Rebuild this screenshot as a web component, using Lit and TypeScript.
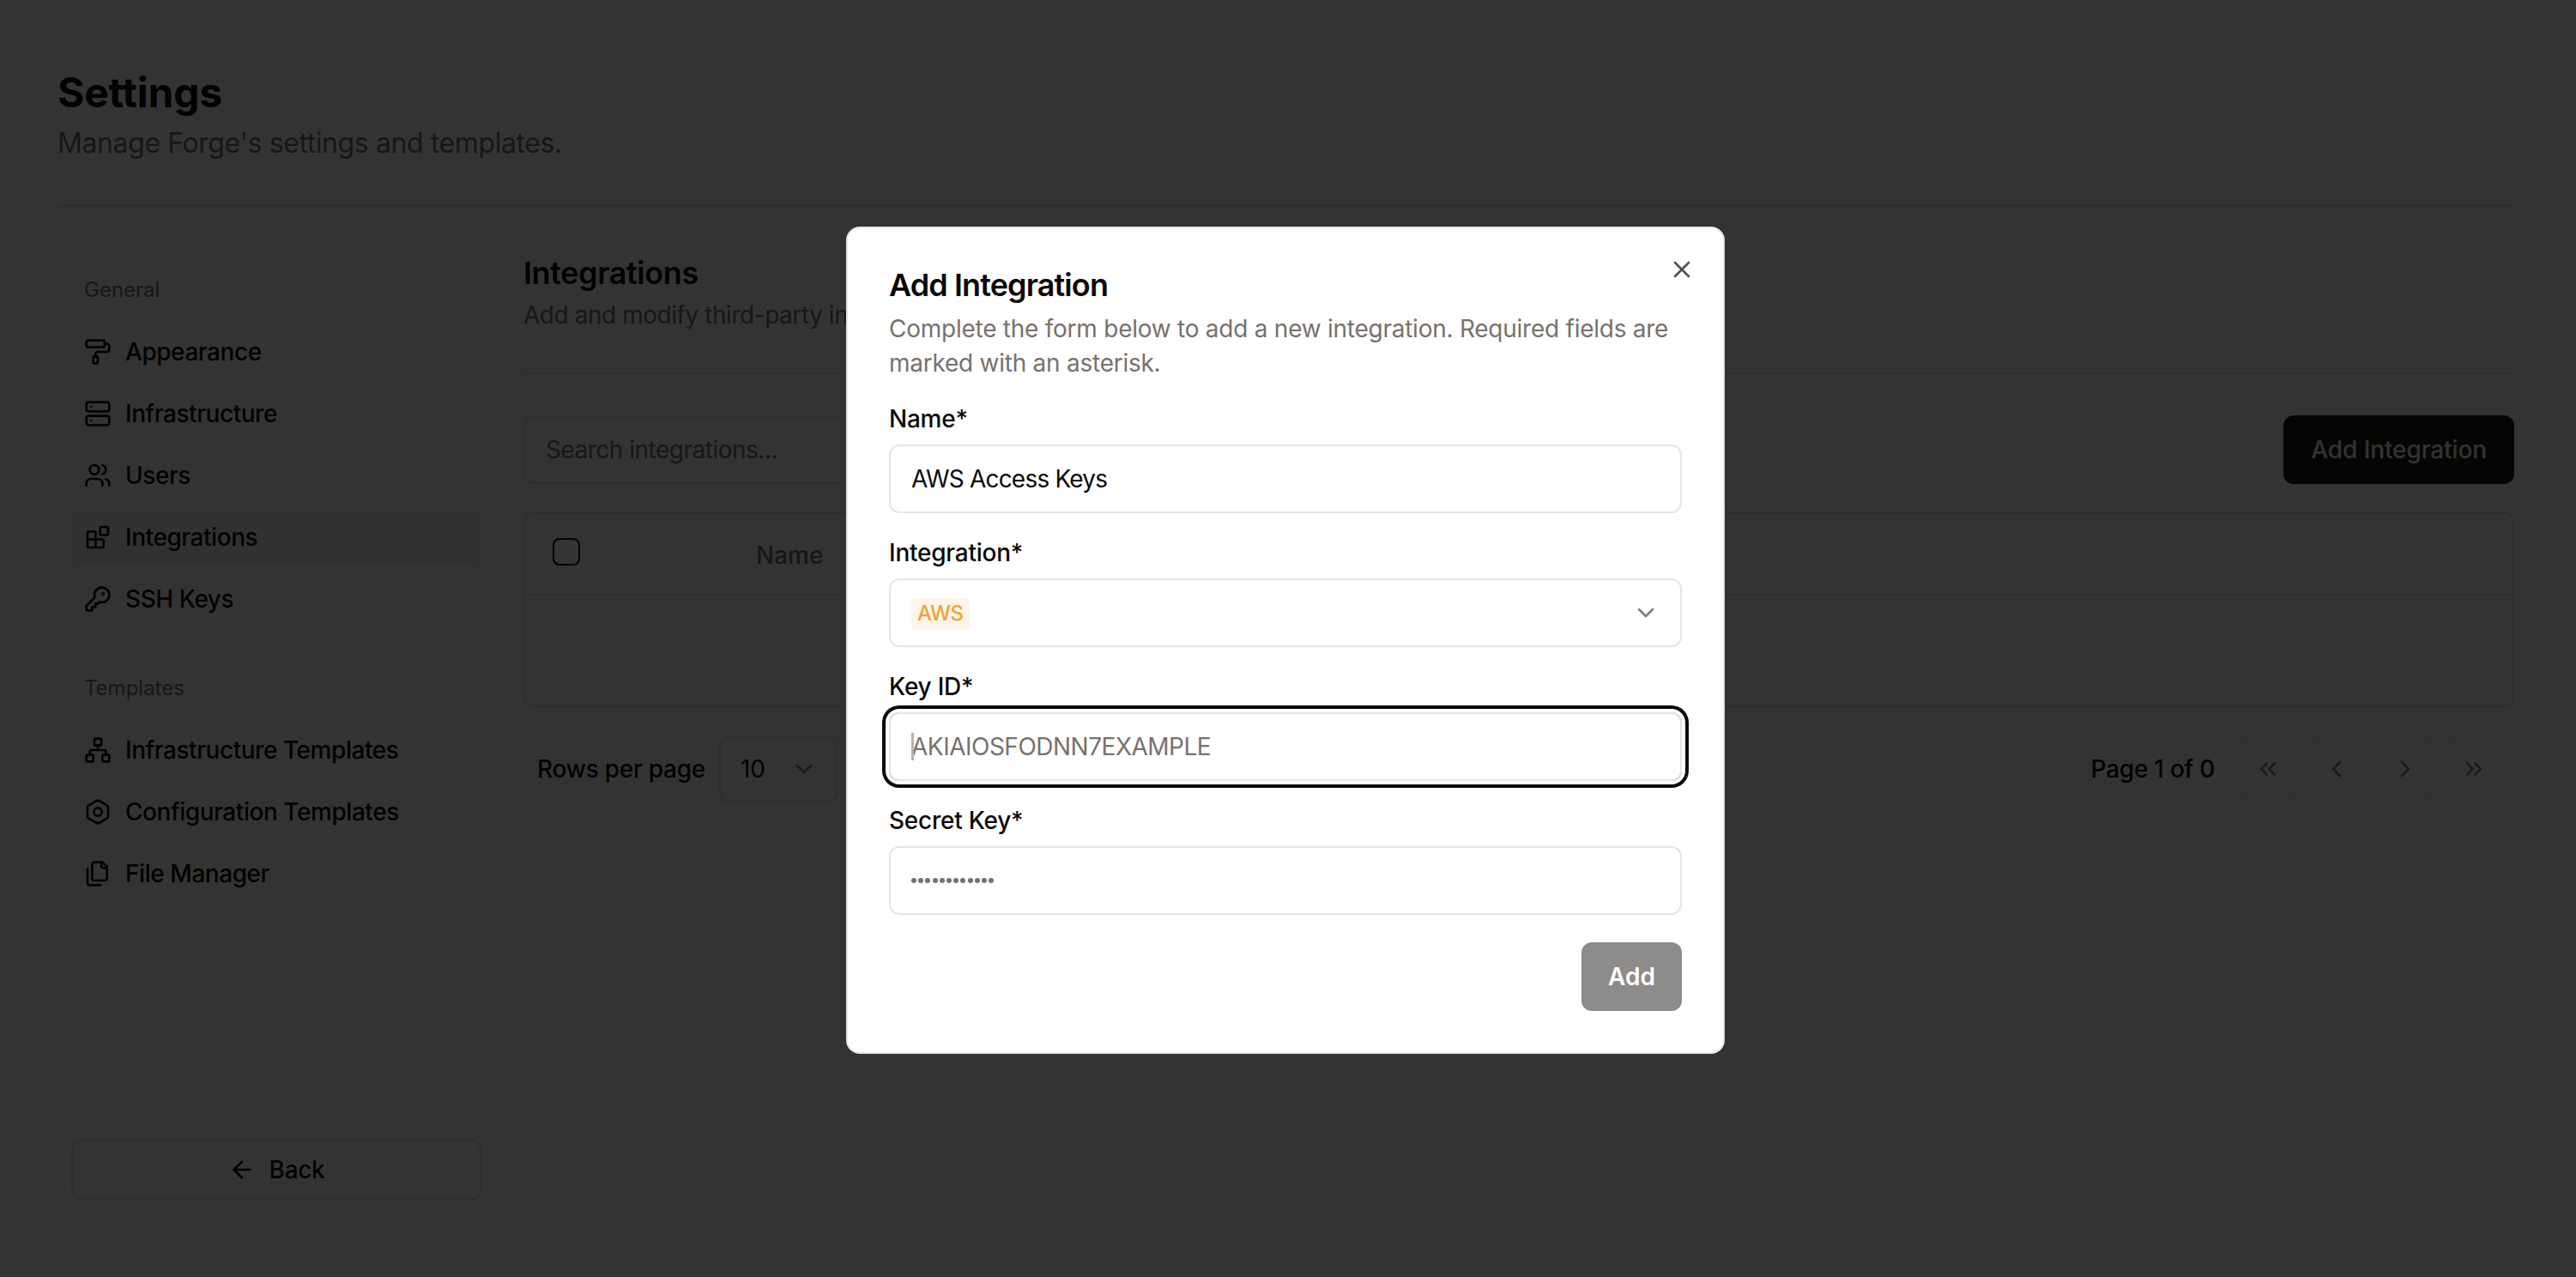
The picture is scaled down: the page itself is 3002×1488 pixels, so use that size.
import { LitElement, html, css, svg } from 'lit';
import { customElement } from 'lit/decorators.js';

const icons = {
  roller: svg`<rect width="16" height="6" x="2" y="2" rx="2"/><path d="M10 16v-2a2 2 0 0 1 2-2h8a2 2 0 0 0 2-2V7a2 2 0 0 0-2-2h-2"/><rect width="4" height="6" x="8" y="16" rx="1"/>`,
  server: svg`<rect width="20" height="8" x="2" y="2" rx="2" ry="2"/><rect width="20" height="8" x="2" y="14" rx="2" ry="2"/><line x1="6" x2="6.01" y1="6" y2="6"/><line x1="6" x2="6.01" y1="18" y2="18"/>`,
  users: svg`<path d="M16 21v-2a4 4 0 0 0-4-4H6a4 4 0 0 0-4 4v2"/><circle cx="9" cy="7" r="4"/><path d="M22 21v-2a4 4 0 0 0-3-3.87"/><path d="M16 3.13a4 4 0 0 1 0 7.75"/>`,
  blocks: svg`<rect width="7" height="7" x="14" y="3" rx="1"/><path d="M10 21V8a1 1 0 0 0-1-1H4a1 1 0 0 0-1 1v12a1 1 0 0 0 1 1h12a1 1 0 0 0 1-1v-5a1 1 0 0 0-1-1H3"/>`,
  key: svg`<path d="M2 18v3c0 .6.4 1 1 1h4v-3h3v-3h2l1.4-1.4a6.5 6.5 0 1 0-4-4Z"/><circle cx="16.5" cy="7.5" r=".5"/>`,
  network: svg`<rect x="16" y="16" width="6" height="6" rx="1"/><rect x="2" y="16" width="6" height="6" rx="1"/><rect x="9" y="2" width="6" height="6" rx="1"/><path d="M5 16v-3a1 1 0 0 1 1-1h12a1 1 0 0 1 1 1v3"/><path d="M12 12V8"/>`,
  hexagon: svg`<path d="M21 16V8a2 2 0 0 0-1-1.73l-7-4a2 2 0 0 0-2 0l-7 4A2 2 0 0 0 3 8v8a2 2 0 0 0 1 1.73l7 4a2 2 0 0 0 2 0l7-4A2 2 0 0 0 21 16z"/><circle cx="12" cy="12" r="3.5"/>`,
  files: svg`<path d="M20 7h-3a2 2 0 0 1-2-2V2"/><path d="M9 18a2 2 0 0 1-2-2V4a2 2 0 0 1 2-2h7l4 4v10a2 2 0 0 1-2 2Z"/><path d="M3 7.6v12.8A1.6 1.6 0 0 0 4.6 22h9.8"/>`,
  arrowLeft: svg`<path d="m12 19-7-7 7-7"/><path d="M19 12H5"/>`,
  chevronDown: svg`<path d="m6 9 6 6 6-6"/>`,
  chevronLeft: svg`<path d="m15 18-6-6 6-6"/>`,
  chevronRight: svg`<path d="m9 18 6-6-6-6"/>`,
  chevronsLeft: svg`<path d="m11 17-5-5 5-5"/><path d="m18 17-5-5 5-5"/>`,
  chevronsRight: svg`<path d="m6 17 5-5-5-5"/><path d="m13 17 5-5-5-5"/>`,
  x: svg`<path d="M18 6 6 18"/><path d="m6 6 12 12"/>`,
};

type IconName = keyof typeof icons;

const icon = (name: IconName) => html`<svg class="icon" viewBox="0 0 24 24" fill="none" stroke="currentColor" stroke-width="2" stroke-linecap="round" stroke-linejoin="round">${icons[name]}</svg>`;

const general: [IconName, string][] = [
  ['roller', 'Appearance'],
  ['server', 'Infrastructure'],
  ['users', 'Users'],
  ['blocks', 'Integrations'],
  ['key', 'SSH Keys'],
];

const templates: [IconName, string][] = [
  ['network', 'Infrastructure Templates'],
  ['hexagon', 'Configuration Templates'],
  ['files', 'File Manager'],
];

@customElement('app-root')
export class AppRoot extends LitElement {
  static styles = css`
    :host {
      display: block;
      position: relative;
      width: 3002px;
      height: 1488px;
      overflow: hidden;
      background: #fff;
      color: #0c0a09;
      font-family: Inter, 'Liberation Sans', sans-serif;
      font-size: 28px;
      line-height: 40px;
    }

    .icon {
      width: 32px;
      height: 32px;
      flex: none;
      display: block;
    }

    /* Page behind the dialog */
    .page {
      height: 100%;
      box-sizing: border-box;
      padding: 76px 72px 89px 67px;
      display: flex;
      flex-direction: column;
    }

    h1 {
      margin: 0;
      font-size: 48px;
      line-height: 64px;
      font-weight: 700;
      letter-spacing: -0.2px;
    }

    .lead {
      margin: 3px 0 0;
      font-size: 32px;
      line-height: 48px;
      letter-spacing: -0.4px;
      color: #78716c;
    }

    .rule {
      height: 2px;
      background: #e7e5e4;
      flex: none;
    }

    .page > .rule {
      margin-top: 48px;
    }

    .body {
      flex: 1;
      display: flex;
      gap: 49px;
      min-height: 0;
    }

    .sidebar {
      width: 478px;
      margin-left: 16px;
      padding-top: 77px;
      display: flex;
      flex-direction: column;
    }

    .section-label {
      padding-left: 15px;
      font-size: 24px;
      line-height: 40px;
      color: #78716c;
      margin-bottom: 20px;
    }

    .nav {
      display: flex;
      flex-direction: column;
      gap: 8px;
    }

    .nav + .section-label {
      margin-top: 52px;
    }

    .nav-item {
      height: 64px;
      padding-left: 15px;
      display: flex;
      align-items: center;
      gap: 16px;
      border-radius: 12px;
      font-weight: 500;
      letter-spacing: -0.45px;
    }

    .nav-item.active {
      background: #f5f5f4;
    }

    .back {
      margin-top: auto;
      height: 72px;
      box-sizing: border-box;
      border: 2px solid #e7e5e4;
      border-radius: 12px;
      display: flex;
      align-items: center;
      justify-content: center;
      gap: 16px;
      font-weight: 500;
      letter-spacing: -0.3px;
    }

    .content {
      flex: 1;
      min-width: 0;
      padding-top: 53px;
    }

    h2 {
      margin: 0;
      font-size: 36px;
      line-height: 48px;
      font-weight: 600;
      letter-spacing: -0.4px;
    }

    .content .lead {
      margin-top: 5px;
      font-size: 28px;
      line-height: 40px;
      letter-spacing: -0.45px;
    }

    .content .rule {
      margin-top: 47px;
    }

    .toolbar {
      margin-top: 48px;
      display: flex;
      justify-content: space-between;
      align-items: center;
    }

    .search {
      width: 760px;
      height: 80px;
      box-sizing: border-box;
      padding-left: 24px;
      border: 2px solid #e7e5e4;
      border-radius: 12px;
      display: flex;
      align-items: center;
      color: #78716c;
      letter-spacing: -0.5px;
    }

    .primary {
      height: 80px;
      padding: 0 32px;
      display: flex;
      align-items: center;
      border-radius: 12px;
      background: #1c1917;
      color: #fafaf9;
      font-weight: 500;
      letter-spacing: -0.1px;
    }

    .table {
      margin-top: 32px;
      height: 228px;
      box-sizing: border-box;
      border: 2px solid #e7e5e4;
      border-radius: 12px;
    }

    .thead {
      height: 96px;
      box-sizing: border-box;
      border-bottom: 2px solid #e7e5e4;
      padding-left: 32px;
      display: flex;
      align-items: center;
    }

    .checkbox {
      width: 32px;
      height: 32px;
      box-sizing: border-box;
      margin-top: -4px;
      border: 2px solid #0c0a09;
      border-radius: 8px;
    }

    .th {
      margin-left: 205px;
      margin-top: 4px;
      color: #78716c;
      font-weight: 500;
    }

    .pager {
      margin-top: 33px;
      padding: 0 17px 0 16px;
      display: flex;
      align-items: center;
      font-weight: 500;
      letter-spacing: -0.25px;
    }

    .page-size {
      margin-left: 16px;
      width: 138px;
      height: 78px;
      box-sizing: border-box;
      padding: 0 21px 0 23px;
      border: 2px solid #e7e5e4;
      border-radius: 12px;
      display: flex;
      align-items: center;
      justify-content: space-between;
      font-weight: 400;
    }

    .page-size .icon {
      opacity: 0.5;
    }

    .page-count {
      margin-left: auto;
      margin-right: 31px;
    }

    .pages {
      display: flex;
      gap: 19px;
    }

    .page-btn {
      width: 61px;
      height: 78px;
      box-sizing: border-box;
      border: 2px solid #f3f2f2;
      border-radius: 12px;
      display: flex;
      align-items: center;
      justify-content: center;
      color: #85837f;
    }

    /* Dialog */
    .overlay {
      position: absolute;
      inset: 0;
      background: rgba(0, 0, 0, 0.8);
    }

    .dialog-layer {
      position: absolute;
      inset: 0 6px 0 0;
      padding-top: 4px;
      box-sizing: border-box;
      display: flex;
      align-items: center;
      justify-content: center;
    }

    .dialog {
      position: relative;
      width: 1024px;
      box-sizing: border-box;
      padding: 48px;
      border: 2px solid #e7e5e4;
      border-radius: 16px;
      background: #fff;
      display: flex;
      flex-direction: column;
    }

    .close {
      position: absolute;
      top: 32px;
      right: 32px;
      opacity: 0.7;
    }

    .dialog h3 {
      margin: 0;
      font-size: 36px;
      line-height: 36px;
      font-weight: 600;
      letter-spacing: -0.9px;
    }

    .dialog p {
      margin: 13px 0 0;
      color: #78716c;
      letter-spacing: -0.25px;
    }

    .field {
      margin-top: 31px;
      display: flex;
      flex-direction: column;
      gap: 16px;
    }

    .field + .field {
      margin-top: 32px;
    }

    label {
      font-weight: 500;
      line-height: 28px;
      letter-spacing: -0.25px;
    }

    .input {
      position: relative;
      height: 80px;
      box-sizing: border-box;
      padding: 0 24px;
      border: 2px solid #e7e5e4;
      border-radius: 12px;
      display: flex;
      align-items: center;
      letter-spacing: -0.8px;
    }

    .input.focused {
      box-shadow: 0 0 0 4px #fff, 0 0 0 8px #0c0a09;
    }

    .input.placeholder {
      color: #78716c;
      letter-spacing: -0.5px;
    }

    .caret {
      position: absolute;
      left: 24px;
      top: 22px;
      width: 3px;
      height: 32px;
      background: #b5b2af;
    }

    .input.select {
      justify-content: space-between;
      padding-right: 24px;
    }

    .input.select .icon {
      opacity: 0.5;
    }

    .badge {
      height: 36px;
      margin-top: 2px;
      padding: 0 7px;
      border-radius: 6px 6px 2px 2px;
      background: #fdf5e8;
      color: #eda33a;
      display: flex;
      align-items: center;
      font-size: 24px;
      font-weight: 500;
      letter-spacing: -0.5px;
    }

    .dots {
      display: flex;
      gap: 2.2px;
    }

    .dots i {
      width: 6px;
      height: 6px;
      border-radius: 50%;
      background: #78716c;
    }

    .actions {
      margin-top: 32px;
      display: flex;
      justify-content: flex-end;
    }

    .submit {
      height: 80px;
      padding: 0 31px;
      display: flex;
      align-items: center;
      border-radius: 12px;
      background: #8e8c8b;
      color: #fff;
      font-weight: 600;
    }
  `;

  private renderNav(items: [IconName, string][]) {
    return html`
      <div class="nav">
        ${items.map(([name, label]) => html`
          <div class="nav-item ${label === 'Integrations' ? 'active' : ''}">${icon(name)}<span>${label}</span></div>
        `)}
      </div>
    `;
  }

  render() {
    return html`
      <div class="page">
        <h1>Settings</h1>
        <p class="lead">Manage Forge's settings and templates.</p>
        <div class="rule"></div>
        <div class="body">
          <aside class="sidebar">
            <div class="section-label">General</div>
            ${this.renderNav(general)}
            <div class="section-label">Templates</div>
            ${this.renderNav(templates)}
            <div class="back">${icon('arrowLeft')}<span>Back</span></div>
          </aside>
          <main class="content">
            <h2>Integrations</h2>
            <p class="lead">Add and modify third-party integrations.</p>
            <div class="rule"></div>
            <div class="toolbar">
              <div class="search">Search integrations...</div>
              <div class="primary">Add Integration</div>
            </div>
            <div class="table">
              <div class="thead"><div class="checkbox"></div><div class="th">Name</div></div>
            </div>
            <div class="pager">
              <span>Rows per page</span>
              <div class="page-size"><span>10</span>${icon('chevronDown')}</div>
              <span class="page-count">Page 1 of 0</span>
              <div class="pages">
                ${(['chevronsLeft', 'chevronLeft', 'chevronRight', 'chevronsRight'] as IconName[]).map(
                  (name) => html`<div class="page-btn">${icon(name)}</div>`
                )}
              </div>
            </div>
          </main>
        </div>
      </div>

      <div class="overlay"></div>

      <div class="dialog-layer">
        <div class="dialog">
          <div class="close">${icon('x')}</div>
          <h3>Add Integration</h3>
          <p>Complete the form below to add a new integration. Required fields are marked with an asterisk.</p>
          <div class="field">
            <label>Name*</label>
            <div class="input">AWS Access Keys</div>
          </div>
          <div class="field">
            <label>Integration*</label>
            <div class="input select"><span class="badge">AWS</span>${icon('chevronDown')}</div>
          </div>
          <div class="field">
            <label>Key ID*</label>
            <div class="input placeholder focused">AKIAIOSFODNN7EXAMPLE<span class="caret"></span></div>
          </div>
          <div class="field">
            <label>Secret Key*</label>
            <div class="input"><span class="dots">${Array.from({ length: 12 }, () => html`<i></i>`)}</span></div>
          </div>
          <div class="actions"><div class="submit">Add</div></div>
        </div>
      </div>
    `;
  }
}

declare global {
  interface HTMLElementTagNameMap {
    'app-root': AppRoot;
  }
}
